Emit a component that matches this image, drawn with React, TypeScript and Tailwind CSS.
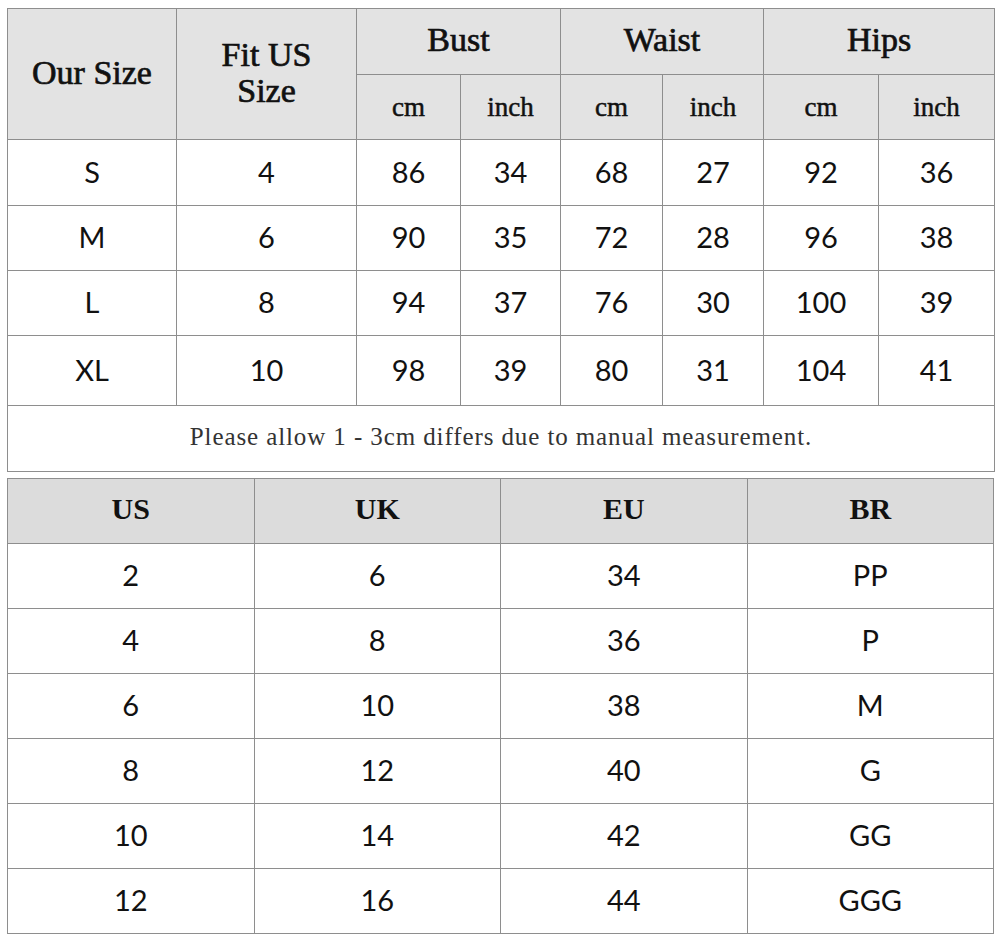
const serif = "font-['Liberation_Serif','Times_New_Roman',serif]";
const sans = "font-['Lato','Noto_Sans',sans-serif]";

const sizeRows = [
  ["S", "4", "86", "34", "68", "27", "92", "36"],
  ["M", "6", "90", "35", "72", "28", "96", "38"],
  ["L", "8", "94", "37", "76", "30", "100", "39"],
  ["XL", "10", "98", "39", "80", "31", "104", "41"],
];

const rowHeights = ["h-[66px]", "h-[65px]", "h-[65px]", "h-[70px]"];

const convRows = [
  ["2", "6", "34", "PP"],
  ["4", "8", "36", "P"],
  ["6", "10", "38", "M"],
  ["8", "12", "40", "G"],
  ["10", "14", "42", "GG"],
  ["12", "16", "44", "GGG"],
];

const cell = "border border-[#8e8e8e] text-center align-middle p-0";
const semi = "font-normal [-webkit-text-stroke:0.7px_#111]";

export default function App() {
  return (
    <div className="w-[1000px] h-[946px] bg-white pt-[8px] pl-[7px]">
      {/* ── Size chart ─────────────────────────────────────────── */}
      <table className="table-fixed border-collapse w-[987px] border border-[#5a5a5a]">
        <colgroup>
          <col className="w-[169px]" />
          <col className="w-[180px]" />
          <col className="w-[104px]" />
          <col className="w-[100px]" />
          <col className="w-[102px]" />
          <col className="w-[101px]" />
          <col className="w-[115px]" />
          <col className="w-[116px]" />
        </colgroup>
        <thead className={`bg-[#e3e3e3] text-[#111] ${serif}`}>
          <tr className="h-[66px]">
            <td rowSpan={2} className={`${cell} ${semi} text-[34px] pb-[3px]`}>
              Our Size
            </td>
            <td rowSpan={2} className={`${cell} ${semi} text-[34px] leading-[36px] pb-[3px]`}>
              Fit US
              <br />
              Size
            </td>
            {["Bust", "Waist", "Hips"].map((h) => (
              <td key={h} colSpan={2} className={`${cell} ${semi} text-[34px] pb-[5px]`}>
                {h}
              </td>
            ))}
          </tr>
          <tr className="h-[65px]">
            {["cm", "inch", "cm", "inch", "cm", "inch"].map((u, i) => (
              <td
                key={`u-${i}`}
                className={`${cell} font-normal [-webkit-text-stroke:0.5px_#111] text-[27px]`}
              >
                {u}
              </td>
            ))}
          </tr>
        </thead>
        <tbody className={`${sans} text-[29px] text-[#111]`}>
          {sizeRows.map((r, ri) => (
            <tr key={r[0]} className={rowHeights[ri]}>
              {r.map((v, vi) => (
                <td key={`c-${vi}`} className={`${cell} pb-[2px]`}>
                  {v}
                </td>
              ))}
            </tr>
          ))}
          <tr className="h-[66px]">
            <td
              colSpan={8}
              className={`${cell} ${serif} text-[25px] tracking-[0.9px] text-[#333] pb-[3px]`}
            >
              Please allow 1 - 3cm differs due to manual measurement.
            </td>
          </tr>
        </tbody>
      </table>

      {/* ── Conversion chart ───────────────────────────────────── */}
      <table className="table-fixed border-collapse w-[987px] mt-[6px] border border-[#8e8e8e]">
        <thead className={`bg-[#dcdcdc] text-[#111] ${serif} font-bold`}>
          <tr className="h-[65px]">
            {["US", "UK", "EU", "BR"].map((h) => (
              <td key={h} className={`${cell} text-[30px] pb-[5px]`}>
                {h}
              </td>
            ))}
          </tr>
        </thead>
        <tbody className={`${sans} text-[29px] text-[#111]`}>
          {convRows.map((r) => (
            <tr key={r[0]} className="h-[65px]">
              {r.map((v, vi) => (
                <td key={`v-${vi}`} className={`${cell} pb-[2px]`}>
                  {v}
                </td>
              ))}
            </tr>
          ))}
        </tbody>
      </table>
    </div>
  );
}
